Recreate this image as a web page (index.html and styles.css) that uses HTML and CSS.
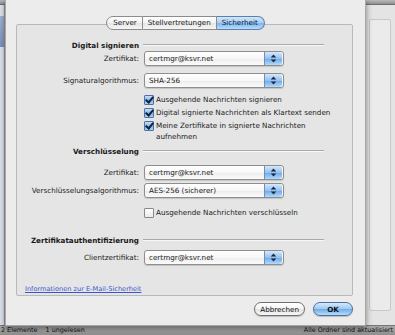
FILE: index.html
```html
<!DOCTYPE html>
<html lang="de">
<head>
    <meta charset="UTF-8">
    <meta name="viewport" content="width=device-width, initial-scale=1.0">
    <title>Account – Sicherheit</title>
    <link rel="stylesheet" href="styles.css">
</head>
<body>
    <div class="desk">
        <div class="titlebar"></div>
        <div class="window">
            <div class="sidebar"><div class="sidebar-sel"></div></div>
            <div class="content"></div>
            <div class="side-panel"><div class="panel-box"></div></div>
        </div>
        <div class="statusbar">
            <span>2 Elemente &nbsp; &nbsp;1 ungelesen</span>
            <span>Alle Ordner sind aktualisiert</span>
        </div>
    </div>

    <div class="sheet">
        <div class="tabbox">
            <div class="tabs">
                <span class="tab">Server</span>
                <span class="tab">Stellvertretungen</span>
                <span class="tab selected">Sicherheit</span>
            </div>

            <div class="form">
                <div class="section s1"><span class="section-title">Digital signieren</span><span class="rule"></span></div>

                <div class="row r1">
                    <span class="label">Zertifikat:</span>
                    <div class="popup">certmgr@ksvr.net<span class="arrows"><svg width="7" height="9" viewBox="0 0 7 9"><path d="M3.5 0.5 L6.3 3.6 H0.7 Z M3.5 8.5 L6.3 5.4 H0.7 Z" fill="#1c2a45"/></svg></span></div>
                </div>
                <div class="row r2">
                    <span class="label">Signaturalgorithmus:</span>
                    <div class="popup">SHA-256<span class="arrows"><svg width="7" height="9" viewBox="0 0 7 9"><path d="M3.5 0.5 L6.3 3.6 H0.7 Z M3.5 8.5 L6.3 5.4 H0.7 Z" fill="#1c2a45"/></svg></span></div>
                </div>

                <label class="check c1"><span class="box on"></span><span>Ausgehende Nachrichten signieren</span></label>
                <label class="check c2"><span class="box on"></span><span>Digital signierte Nachrichten als Klartext senden</span></label>
                <label class="check c3"><span class="box on"></span><span>Meine Zertifikate in signierte Nachrichten<br>aufnehmen</span></label>

                <div class="section s2"><span class="section-title">Verschlüsselung</span><span class="rule"></span></div>

                <div class="row r3">
                    <span class="label">Zertifikat:</span>
                    <div class="popup">certmgr@ksvr.net<span class="arrows"><svg width="7" height="9" viewBox="0 0 7 9"><path d="M3.5 0.5 L6.3 3.6 H0.7 Z M3.5 8.5 L6.3 5.4 H0.7 Z" fill="#1c2a45"/></svg></span></div>
                </div>
                <div class="row r4">
                    <span class="label">Verschlüsselungsalgorithmus:</span>
                    <div class="popup">AES-256 (sicherer)<span class="arrows"><svg width="7" height="9" viewBox="0 0 7 9"><path d="M3.5 0.5 L6.3 3.6 H0.7 Z M3.5 8.5 L6.3 5.4 H0.7 Z" fill="#1c2a45"/></svg></span></div>
                </div>

                <label class="check c4"><span class="box"></span><span>Ausgehende Nachrichten verschlüsseln</span></label>

                <div class="section s3"><span class="section-title">Zertifikatauthentifizierung</span><span class="rule"></span></div>

                <div class="row r5">
                    <span class="label">Clientzertifikat:</span>
                    <div class="popup">certmgr@ksvr.net<span class="arrows"><svg width="7" height="9" viewBox="0 0 7 9"><path d="M3.5 0.5 L6.3 3.6 H0.7 Z M3.5 8.5 L6.3 5.4 H0.7 Z" fill="#1c2a45"/></svg></span></div>
                </div>

                <a class="info-link" href="#">Informationen zur E-Mail-Sicherheit</a>
            </div>
        </div>

        <div class="buttons">
            <button class="btn">Abbrechen</button>
            <button class="btn default">OK</button>
        </div>
    </div>
</body>
</html>
```

FILE: styles.css
```css
body {
    margin: 0;
    width: 395px;
    height: 335px;
    overflow: hidden;
    font-family: "DejaVu Sans", "Liberation Sans", sans-serif;
    font-size: 7.2px;
    color: #1a1a1a;
    position: relative;
    background: #e8e8e8;
}

/* window behind the sheet */
.desk {
    display: flex;
    flex-direction: column;
    height: 100%;
}

.titlebar {
    height: 4px;
    background: linear-gradient(#b9b9b9, #8f8f8f);
    border-bottom: 1px solid #6e6e6e;
}

.window {
    flex: 1;
    display: flex;
}

.sidebar {
    width: 4px;
    background: #dde3ec;
    border-right: 1px solid #9a9a9a;
}

.sidebar-sel {
    margin-top: 11px;
    height: 31px;
    background: linear-gradient(#9fb3d3, #7a93bd);
}

.content {
    flex: 1;
    background: #f2f2f2;
}

.side-panel {
    width: 29px;
    background: #e4e4e4;
    padding: 14px 4px 14px 3px;
    box-sizing: border-box;
    display: flex;
}

.panel-box {
    flex: 1;
    border: 1px solid #c9c9c9;
    border-radius: 2px;
    background: #ebebeb;
}

.statusbar {
    height: 9px;
    background: linear-gradient(#a9a9a9, #8e8e8e);
    border-top: 1px solid #777;
    display: flex;
    justify-content: space-between;
    padding: 0 2px 0 1px;
    font-size: 6.4px;
    line-height: 9px;
    color: #111;
    white-space: nowrap;
}

/* the sheet lies over the window */
.sheet {
    position: absolute;
    left: 5px;
    top: 0;
    width: 361px;
    height: 326px;
    box-sizing: border-box;
    background: #ececec;
    border: 1px solid #a8a8a8;
    border-top: none;
    box-shadow: 0 2px 6px rgba(0, 0, 0, 0.45);
    padding: 24px 12px 0 10px;
}

.tabbox {
    height: 272px;
    box-sizing: border-box;
    border: 1px solid #b9b9b9;
    border-radius: 2px;
    background: #e5e5e5;
}

.tabs {
    display: flex;
    justify-content: center;
    margin-top: -9px;
    margin-left: 2px;
}

.tab {
    height: 12px;
    line-height: 12px;
    padding: 0 5px;
    border: 1px solid #8c8c8c;
    border-left: none;
    background: linear-gradient(#ffffff, #f2f2f2 50%, #e4e4e4 51%, #f6f6f6);
    color: #1a1a1a;
}

.tab:first-child {
    border-left: 1px solid #8c8c8c;
    border-radius: 7px 0 0 7px;
    padding-left: 6px;
}

.tab:last-child {
    border-radius: 0 7px 7px 0;
    padding-right: 6px;
}

.tab.selected {
    background: linear-gradient(#d3e7fb, #a6cdf3 50%, #7fb4ec 51%, #b7dcfb);
    border-color: #5c7fb1;
    color: #0b1a33;
}

.form {
    display: grid;
    grid-template-columns: 122px 140px;
    column-gap: 5px;
    align-items: center;
}

.section {
    grid-column: 1 / span 2;
    display: grid;
    grid-template-columns: 122px 181px;
    column-gap: 4px;
    align-items: center;
    height: 12px;
}

.section-title {
    text-align: right;
    font-weight: bold;
    white-space: nowrap;
}

.rule {
    height: 1px;
    background: #a9a9a9;
    border-bottom: 1px solid #f8f8f8;
}

.s1 { margin-top: 9px; }
.s2 { margin-top: 3px; }
.s3 { margin-top: 16px; }

.row {
    grid-column: 1 / span 2;
    display: grid;
    grid-template-columns: 122px 140px;
    column-gap: 5px;
    align-items: center;
    height: 15px;
}

.r1 { margin-top: 0; }
.r2 { margin-top: 7px; }
.r3 { margin-top: 8px; }
.r4 { margin-top: 3px; }
.r5 { margin-top: 4px; }

.label {
    text-align: right;
    white-space: nowrap;
}

.popup {
    position: relative;
    height: 13px;
    line-height: 13px;
    border: 1px solid #8e8e8e;
    border-radius: 3px;
    background: linear-gradient(#ffffff, #f7f7f7 50%, #ececec 51%, #fbfbfb);
    padding-left: 4px;
    box-shadow: 0 1px 1px rgba(0, 0, 0, 0.15);
}

.arrows {
    position: absolute;
    right: 1px;
    top: 0;
    width: 17px;
    height: 13px;
    display: flex;
    align-items: center;
    justify-content: center;
    border-left: 1px solid #6d8fc0;
    border-radius: 0 3px 3px 0;
    background: linear-gradient(#d5e8fb, #95c1ef 50%, #6da7e8 51%, #b3dafb);
}

.check {
    grid-column: 2;
    display: flex;
    align-items: flex-start;
    gap: 2px;
    line-height: 11px;
    white-space: nowrap;
}

.c1 { margin-top: 6px; }
.c2 { margin-top: 2px; }
.c3 { margin-top: 2px; }
.c4 { margin-top: 9px; }

.box {
    flex: none;
    width: 8px;
    height: 8px;
    margin-top: 1px;
    border: 1px solid #888;
    border-radius: 1px;
    background: linear-gradient(#ffffff, #e9e9e9);
}

.box.on {
    border-color: #51719f;
    background: linear-gradient(#c7e0fa, #7fb3ea 55%, #a6d0f7);
    position: relative;
}

.box.on::after {
    content: "";
    position: absolute;
    left: 2px;
    top: -1px;
    width: 3px;
    height: 6px;
    border: solid #13213a;
    border-width: 0 2px 2px 0;
    transform: rotate(40deg);
}

.info-link {
    grid-column: 1 / span 2;
    margin: 19px 0 0 8px;
    color: #3a54d0;
    font-size: 6.6px;
    line-height: 10px;
}

.buttons {
    display: flex;
    justify-content: flex-end;
    gap: 8px;
    margin-top: 6px;
}

.btn {
    font-family: "DejaVu Sans", "Liberation Sans", sans-serif;
    font-size: 7.2px;
    height: 14px;
    padding: 0 5px;
    border: 1px solid #6f6f6f;
    border-radius: 7px;
    background: linear-gradient(#ffffff, #f4f4f4 50%, #e2e2e2 51%, #f7f7f7);
    color: #111;
    box-shadow: 0 1px 1px rgba(0, 0, 0, 0.2);
}

.btn.default {
    width: 40px;
    border-color: #4d6f9f;
    background: linear-gradient(#d6eafc, #9dc8f2 50%, #6faae9 51%, #b8dcfb);
    font-weight: bold;
}
```
